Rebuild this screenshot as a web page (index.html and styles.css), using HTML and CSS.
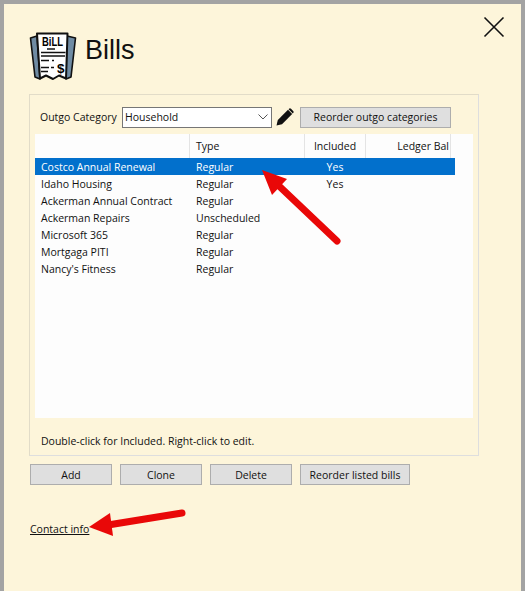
FILE: index.html
```html
<!DOCTYPE html>
<html lang="en">
<head>
<meta charset="utf-8">
<title>Bills</title>
<link rel="stylesheet" href="styles.css">
</head>
<body>
<div class="window">
  <button class="close" aria-label="Close">
    <svg width="22" height="22" viewBox="0 0 22 22"><path d="M1.5 1.5L20.5 20.5M20.5 1.5L1.5 20.5" stroke="#111" stroke-width="1.6" fill="none"/></svg>
  </button>
  <header class="title">
    <svg class="logo" width="48" height="48" viewBox="0 0 48 48">
      <path d="M1.5 6L8 4L11 47L6 45Z" fill="#6f8ba3" stroke="#111" stroke-width="1.6" stroke-linejoin="round"/>
      <path d="M46.500 6L38 4L37 47L42 45Z" fill="#6f8ba3" stroke="#111" stroke-width="1.6" stroke-linejoin="round"/>
      <path d="M8 1.500H38.500L37 46.500L30 43.500L24 47L17 43.500L11 46.500Z" fill="#fff" stroke="#111" stroke-width="2" stroke-linejoin="round"/>
      <text x="13" y="14" class="logo-text" textLength="21" lengthAdjust="spacingAndGlyphs">BiLL</text>
      <path d="M18 17H26" stroke="#111" stroke-width="1.5"/>
      <path d="M12 20.500H36.500M12 24H36" stroke="#111" stroke-width="1.5"/>
      <path d="M12 28.500H20M23 28.500H25M12 35.500H20M22 35.500H25M12 39.500H19" stroke="#111" stroke-width="1.5"/>
      <text x="28" y="40.500" class="logo-dollar">$</text>
    </svg>
    <h1>Bills</h1>
  </header>

  <section class="panel">
    <div class="toolbar">
      <label class="cat-label">Outgo Category</label>
      <div class="combo">
        <span>Household</span>
        <svg width="10" height="6" viewBox="0 0 10 6"><path d="M.5.5L5 5L9.5.5" stroke="#555" fill="none"/></svg>
      </div>
      <svg class="pencil" width="18" height="18" viewBox="0 0 18 18"><path d="M0.5 17.5L1.8 12L12 1.8L16.2 6L6 16.2Z" fill="#111"/><path d="M13 .8a1.5 1.5 0 0 1 2 0l2.2 2.2a1.5 1.5 0 0 1 0 2L16.8 5.4L12.6 1.2Z" fill="#111"/></svg>
      <button class="btn wide">Reorder outgo categories</button>
    </div>

    <div class="list">
      <div class="row head">
        <div class="h"></div>
        <div class="h">Type</div>
        <div class="h center">Included</div>
        <div class="h right">Ledger Bal</div>
      </div>
      <div class="row item selected"><div>Costco Annual Renewal</div><div>Regular</div><div class="center">Yes</div><div></div></div>
      <div class="row item"><div>Idaho Housing</div><div>Regular</div><div class="center">Yes</div><div></div></div>
      <div class="row item"><div>Ackerman Annual Contract</div><div>Regular</div><div></div><div></div></div>
      <div class="row item"><div>Ackerman Repairs</div><div>Unscheduled</div><div></div><div></div></div>
      <div class="row item"><div>Microsoft 365</div><div>Regular</div><div></div><div></div></div>
      <div class="row item"><div>Mortgaga PITI</div><div>Regular</div><div></div><div></div></div>
      <div class="row item"><div>Nancy's Fitness</div><div>Regular</div><div></div><div></div></div>
    </div>

    <p class="hint">Double-click for Included. Right-click to edit.</p>
  </section>

  <div class="actions">
    <button class="btn">Add</button>
    <button class="btn">Clone</button>
    <button class="btn">Delete</button>
    <button class="btn last">Reorder listed bills</button>
  </div>

  <a class="contact" href="#">Contact info</a>

  <svg class="arrows" width="525" height="591" viewBox="0 0 525 591">
    <path d="M337 241L278 185" stroke="#e90808" stroke-width="7" stroke-linecap="round" fill="none"/>
    <path d="M262 170L287 179L272 195Z" fill="#e90808"/>
    <path d="M182 513L108 525" stroke="#e90808" stroke-width="7" stroke-linecap="round" fill="none"/>
    <path d="M89 527L110 513L113 536Z" fill="#e90808"/>
  </svg>
</div>
</body>
</html>
```
FILE: styles.css
```css
* { box-sizing: border-box; }
html, body { margin: 0; padding: 0; }
body {
  width: 525px;
  height: 591px;
  overflow: hidden;
  font-family: "Open Sans", "Liberation Sans", sans-serif;
  font-size: 10.5px;
  color: #111;
}
.window {
  position: relative;
  width: 525px;
  height: 591px;
  background: #fdf5da;
  border: solid #a3a3a3;
  border-width: 4px 4px 0 4px;
  padding: 28px 0 0 25px;
  display: flex;
  flex-direction: column;
  align-items: flex-start;
}
.close {
  position: absolute;
  top: 12px;
  left: 479px;
  padding: 0;
  border: 0;
  background: none;
  line-height: 0;
}
.title {
  display: flex;
  align-items: center;
  gap: 8px;
  height: 48px;
}
h1 {
  margin: 0 0 12px;
  font-family: "Liberation Sans", sans-serif;
  font-size: 27px;
  font-weight: 400;
  color: #111;
}
.logo-text { font: 700 12px "Liberation Sans", sans-serif; }
.logo-dollar { font: 700 13.500px "Liberation Sans", sans-serif; }
.panel {
  width: 450px;
  height: 362px;
  margin-top: 14px;
  border: 1px solid #e2dcc8;
  border-right-color: #dedede;
  border-bottom-color: #dedede;
  padding: 11px 5px 0;
  display: flex;
  flex-direction: column;
}
.toolbar {
  height: 22px;
  display: flex;
  align-items: center;
}
.cat-label { margin-left: 5px; width: 82px; white-space: nowrap; }
.combo {
  width: 150px;
  height: 21px;
  background: #fff;
  border: 1px solid #767676;
  padding: 0 3px 0 2px;
  display: flex;
  align-items: center;
  justify-content: space-between;
}
.pencil { margin-left: 4px; }
.btn {
  width: 82px;
  height: 21px;
  padding: 0;
  background: #dfdfdf;
  border: 1px solid #adadad;
  font: inherit;
  color: #111;
}
.btn.wide { width: 151px; margin-left: 6px; }
.list {
  width: 438px;
  height: 284px;
  margin-top: 6px;
  background: #fdfdfd;
}
.row {
  width: 420px;
  display: grid;
  grid-template-columns: 155px 115px 60px 90px;
}
.head {
  width: 438px;
  height: 24px;
  grid-template-columns: 155px 115px 61px 85px 22px;
  background: #fdfdfd;
}
.h {
  border-right: 1px solid #e4e4e4;
  padding: 5px 6px 0;
}
.h.center { padding: 5px 0 0; text-align: center; }
.h.right { padding: 5px 1px 0 0; text-align: right; }
.item { height: 17px; line-height: 18px; }
.item > div { padding-left: 6px; white-space: nowrap; }
.item > .center { padding-left: 0; text-align: center; }
.selected { background: #0270cc; color: #fff; }
.hint { margin: 16px 0 0 6px; }
.actions {
  display: flex;
  gap: 8px;
  margin: 8px 0 0 1px;
}
.btn.last { width: 110px; }
.contact {
  margin: 37px 0 0 1px;
  color: #111;
  text-decoration: underline;
}
.arrows {
  position: absolute;
  left: -4px;
  top: -4px;
  pointer-events: none;
}
```
